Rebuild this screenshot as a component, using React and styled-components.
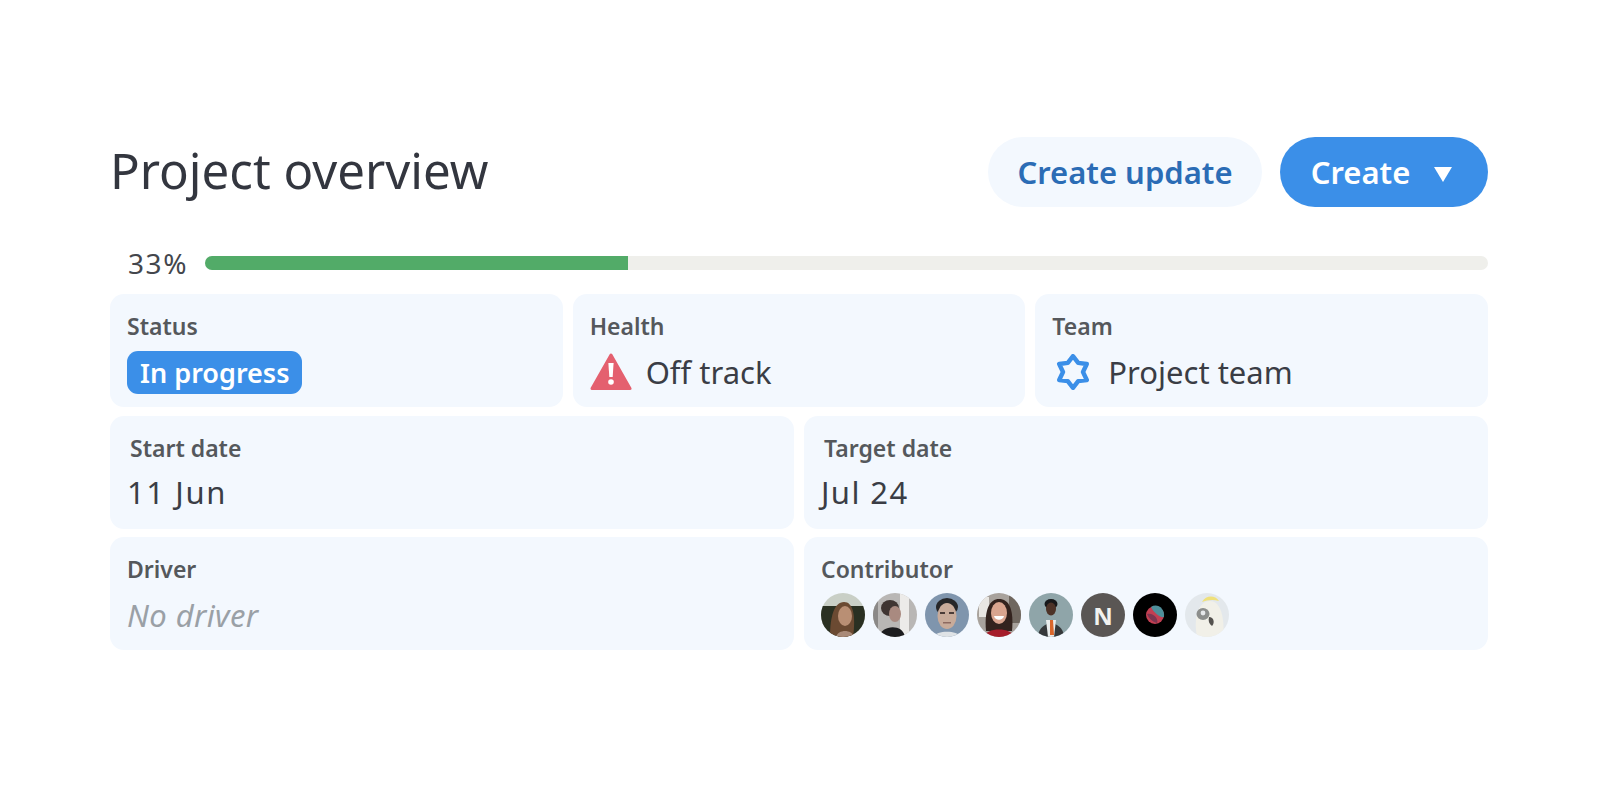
import styled, { createGlobalStyle } from "styled-components";

const GlobalStyle = createGlobalStyle`
  html, body {
    margin: 0;
    padding: 0;
    background: #fff;
    font-family: "Noto Sans", "Open Sans", sans-serif;
  }
`;

const Page = styled.main`
  padding: 137px 114px 0 110px;
`;

const Header = styled.header`
  display: flex;
  justify-content: space-between;
  align-items: center;
  height: 70px;
`;

const Title = styled.h1`
  margin: 0 0 6px;
  font-size: 49.2px;
  font-weight: 400;
  color: #33363f;
`;

const Actions = styled.div`
  display: flex;
  gap: 18px;
`;

const Button = styled.button`
  display: flex;
  align-items: center;
  justify-content: center;
  gap: 24px;
  height: 70px;
  width: ${(props) => (props.$primary ? "208px" : "274px")};
  padding: 0 ${(props) => (props.$primary ? "5px" : "0")} 0 0;
  border: 0;
  border-radius: 35px;
  background: ${(props) => (props.$primary ? "#3b8fe8" : "#f3f8fe")};
  color: ${(props) => (props.$primary ? "#fff" : "#2b6cb5")};
  font-family: inherit;
  font-size: 31px;
  font-weight: 600;
`;

const Caret = styled.span`
  width: 0;
  height: 0;
  margin-top: 5px;
  border-left: 9.5px solid transparent;
  border-right: 9.5px solid transparent;
  border-top: 15px solid #fff;
`;

const ProgressRow = styled.div`
  display: flex;
  align-items: center;
  gap: 18px;
  height: 40px;
  margin: 36px 0 11px;
  padding-left: 18px;
`;

const Percent = styled.span`
  width: 59px;
  font-size: 28px;
  letter-spacing: 1.6px;
  line-height: 40px;
  color: #43464c;
`;

const Track = styled.div`
  flex: 1;
  height: 14px;
  border-radius: 7px;
  background: #efefeb;
  overflow: hidden;
`;

const Fill = styled.div`
  height: 100%;
  background: #52ab68;
`;

const Rows = styled.div`
  display: flex;
  flex-direction: column;
  gap: 8.5px;
`;

const CardRow = styled.div`
  display: grid;
  grid-template-columns: repeat(${(props) => props.$cols}, 1fr);
  gap: 10px;
`;

const Card = styled.section`
  height: 113px;
  box-sizing: border-box;
  padding: 16px 17px 0;
  border-radius: 14px;
  background: #f3f8fe;
`;

const Label = styled.div`
  height: 32px;
  margin-left: ${(props) => (props.$nudge ? "3px" : "0")};
  font-size: 23px;
  line-height: 32px;
  font-weight: 600;
  color: #55585c;
`;

const Value = styled.div`
  display: flex;
  align-items: center;
  gap: ${(props) => props.$gap || 0}px;
  height: 46px;
  margin-top: 7px;
  font-size: 31px;
  letter-spacing: ${(props) => props.$spacing || 0}px;
  color: #3a3d45;
`;

const DateValue = styled(Value)`
  margin-top: 5px;
`;

const Empty = styled(Value)`
  font-style: italic;
  color: #9aa0a6;
`;

const Badge = styled.span`
  display: inline-flex;
  align-items: center;
  height: 43px;
  padding: 0 13px;
  border-radius: 11px;
  background: #3b8fe8;
  color: #fff;
  font-size: 27px;
  font-weight: 600;
`;

const Avatars = styled.div`
  display: flex;
  gap: 8px;
  margin-top: 8px;
`;

const Avatar = styled.svg`
  display: block;
  width: 44px;
  height: 44px;
  border-radius: 50%;
  filter: blur(0.4px);
`;

const InitialAvatar = styled.div`
  display: flex;
  align-items: center;
  justify-content: center;
  width: 44px;
  height: 44px;
  border-radius: 50%;
  background: #5a5654;
  color: #f2f2f0;
  font-size: 24px;
  font-weight: 700;
`;

const WarningIcon = () => (
  <svg width="42" height="38" viewBox="0 0 42 38">
    <path
      d="M21 2 L40 35.5 H2 Z"
      fill="#e4606f"
      stroke="#e4606f"
      strokeWidth="3"
      strokeLinejoin="round"
    />
    <path d="M18.4 10 H23.6 L22.7 24 H19.3 Z" fill="#fff" />
    <circle cx="21" cy="29" r="2.8" fill="#fff" />
  </svg>
);

const TeamIcon = () => (
  <svg width="38" height="36" viewBox="0 0 38 36">
    <path
      d="M21 2.2 L26.2 8.9 L34.8 10 L31 18 L34.8 26 L26.2 27.1 L21 33.8 L15.8 27.1 L7.2 26 L11 18 L7.2 10 L15.8 8.9 Z"
      fill="none"
      stroke="#3b8fe8"
      strokeWidth="4.4"
      strokeLinejoin="round"
    />
  </svg>
);

// the contributor photos, as small drawings
const photos = [
  <>
    <rect width="44" height="44" fill="#c9cfc6" />
    <rect y="13" width="44" height="31" fill="#2a3022" />
    <path d="M9 44 C9 24 13 9 23 9 C32 9 35 22 32 44 Z" fill="#6b4a32" />
    <ellipse cx="24" cy="23" rx="7" ry="10" fill="#b98f74" />
    <path d="M15 44 C17 36 31 36 33 44 Z" fill="#a98a78" />
  </>,
  <>
    <rect width="44" height="44" fill="#b9b7b5" />
    <rect x="27" width="9" height="44" fill="#ecebe9" />
    <rect width="5" height="44" fill="#8b8987" />
    <ellipse cx="17" cy="15" rx="9" ry="8" fill="#3f3532" />
    <ellipse cx="22" cy="21" rx="6" ry="8" fill="#a98a80" />
    <path d="M6 44 C8 32 30 30 32 44 Z" fill="#1c1c1e" />
  </>,
  <>
    <rect width="44" height="44" fill="#7f95ad" />
    <ellipse cx="22" cy="14" rx="11" ry="9" fill="#262628" />
    <ellipse cx="22" cy="23" rx="9.5" ry="13" fill="#c8ab9a" />
    <rect x="15" y="19" width="5" height="2" fill="#4a3c38" />
    <rect x="24" y="19" width="5" height="2" fill="#4a3c38" />
    <path d="M18 29 H26 V30.5 H18 Z" fill="#8d6a60" />
    <path d="M8 44 C12 37 32 37 36 44 Z" fill="#dfe3e6" />
  </>,
  <>
    <rect width="44" height="44" fill="#a8a29c" />
    <rect x="2" y="4" width="10" height="20" fill="#e8e6e2" />
    <rect x="32" width="12" height="30" fill="#6f675f" />
    <path d="M9 38 C7 16 13 6 22 6 C32 6 37 16 35 38 Z" fill="#33231e" />
    <ellipse cx="22" cy="20" rx="8" ry="11" fill="#d9a58f" />
    <path d="M17 23 H27 C26 28 18 28 17 23 Z" fill="#fff" />
    <path d="M6 44 C10 34 34 34 38 44 Z" fill="#a51d2b" />
  </>,
  <>
    <rect width="44" height="44" fill="#8fa5a9" />
    <ellipse cx="22" cy="11" rx="6.5" ry="5" fill="#17181a" />
    <ellipse cx="22" cy="16" rx="5" ry="6.5" fill="#4d3328" />
    <path d="M9 44 C10 26 34 26 35 44 Z" fill="#35383a" />
    <path d="M17 27 L27 27 L25 44 H19 Z" fill="#e9ecec" />
    <path d="M21 27 H24 L25 42 H21 Z" fill="#d9662b" />
  </>,
  null,
  <>
    <rect width="44" height="44" fill="#000" />
    <circle cx="22" cy="22" r="9" fill="#c33f52" />
    <path d="M18 14 C24 10 32 15 31 24 C27 25 21 20 18 14 Z" fill="#4e8f9a" />
    <path d="M14 21 C20 19 26 26 24 30 C20 29 16 26 14 21 Z" fill="#7d3550" />
  </>,
  <>
    <rect width="44" height="44" fill="#e3e8ec" />
    <path d="M12 44 C8 24 14 8 25 8 C36 8 40 26 38 44 Z" fill="#f1f0e8" />
    <path d="M17 9 C21 2 30 2 34 8 C28 6 22 7 17 9 Z" fill="#efe07a" />
    <ellipse cx="18" cy="21" rx="6.5" ry="6" fill="#8c8e8c" />
    <circle cx="18" cy="20" r="2.4" fill="#e6e8ea" />
    <path d="M24 24 C29 24 30 30 27 33 C24 31 23 28 24 24 Z" fill="#54524f" />
  </>,
];

function App() {
  const progress = 33;

  return (
    <Page>
      <GlobalStyle />
      <Header>
        <Title>Project overview</Title>
        <Actions>
          <Button>Create update</Button>
          <Button $primary>
            Create
            <Caret />
          </Button>
        </Actions>
      </Header>
      <ProgressRow>
        <Percent>{progress}%</Percent>
        <Track>
          <Fill style={{ width: `${progress}%` }} />
        </Track>
      </ProgressRow>
      <Rows>
        <CardRow $cols={3}>
          <Card>
            <Label>Status</Label>
            <Value>
              <Badge>In progress</Badge>
            </Value>
          </Card>
          <Card>
            <Label>Health</Label>
            <Value $gap={14}>
              <WarningIcon />
              Off track
            </Value>
          </Card>
          <Card>
            <Label>Team</Label>
            <Value $gap={18}>
              <TeamIcon />
              Project team
            </Value>
          </Card>
        </CardRow>
        <CardRow $cols={2}>
          <Card>
            <Label $nudge>Start date</Label>
            <DateValue $spacing={1.6}>11 Jun</DateValue>
          </Card>
          <Card>
            <Label $nudge>Target date</Label>
            <DateValue $spacing={1.4}>Jul 24</DateValue>
          </Card>
        </CardRow>
        <CardRow $cols={2}>
          <Card>
            <Label>Driver</Label>
            <Empty $spacing={0.4}>No driver</Empty>
          </Card>
          <Card>
            <Label>Contributor</Label>
            <Avatars>
              {photos.map((photo, i) =>
                photo ? (
                  <Avatar key={i} viewBox="0 0 44 44">
                    {photo}
                  </Avatar>
                ) : (
                  <InitialAvatar key={i}>N</InitialAvatar>
                ),
              )}
            </Avatars>
          </Card>
        </CardRow>
      </Rows>
    </Page>
  );
}

export default App;
